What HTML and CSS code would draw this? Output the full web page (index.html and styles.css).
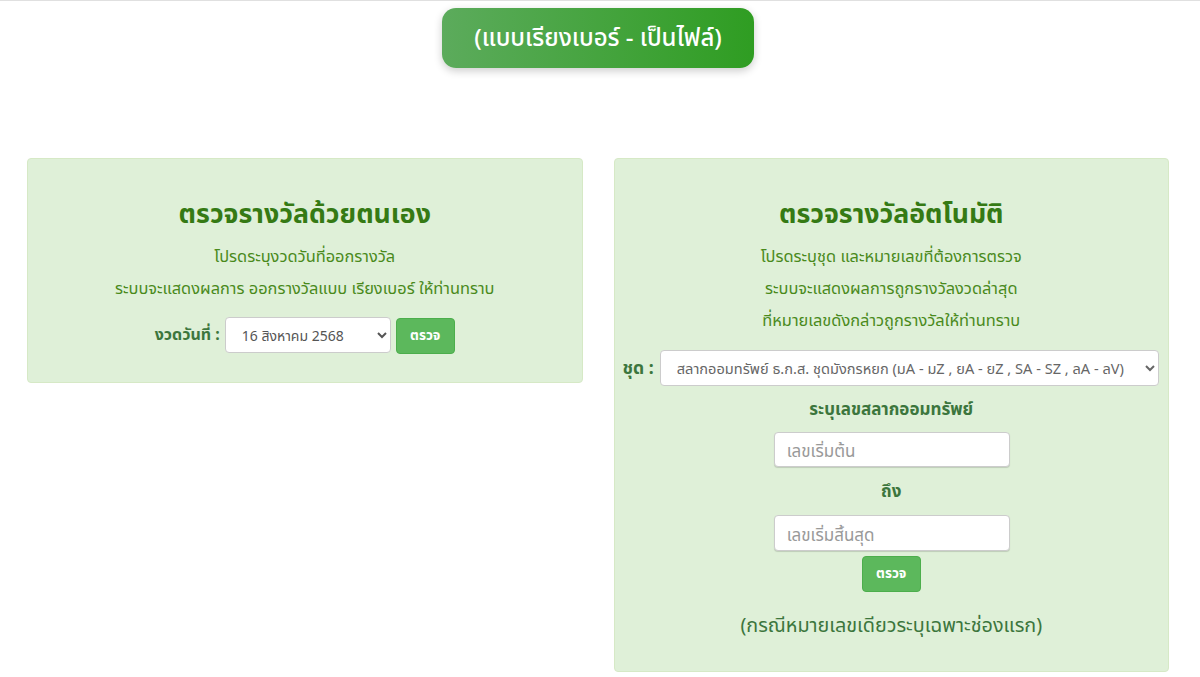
FILE: index.html
```html
<!DOCTYPE html>
<html lang="th">
<head>
    <meta charset="UTF-8">
    <meta name="viewport" content="width=device-width, initial-scale=1.0">
    <title>ตรวจรางวัล</title>
    <link rel="stylesheet" href="styles.css">
</head>
<body>
    <div class="top">
        <a class="file-btn" href="#">(แบบเรียงเบอร์ - เป็นไฟล์)</a>
    </div>

    <div class="panels">
        <div class="panel panel-short">
            <h2>ตรวจรางวัลด้วยตนเอง</h2>
            <p>โปรดระบุงวดวันที่ออกรางวัล</p>
            <p>ระบบจะแสดงผลการ ออกรางวัลแบบ เรียงเบอร์ ให้ท่านทราบ</p>
            <form class="date-row">
                <label for="draw">งวดวันที่ :</label>
                <select id="draw" class="date-select">
                    <option>16 สิงหาคม 2568</option>
                </select>
                <button type="button" class="check">ตรวจ</button>
            </form>
        </div>

        <div class="panel panel-tall">
            <h2>ตรวจรางวัลอัตโนมัติ</h2>
            <p>โปรดระบุชุด และหมายเลขที่ต้องการตรวจ</p>
            <p>ระบบจะแสดงผลการถูกรางวัลงวดล่าสุด</p>
            <p>ที่หมายเลขดังกล่าวถูกรางวัลให้ท่านทราบ</p>
            <form>
                <div class="set-row">
                    <label for="set">ชุด :</label>
                    <select id="set" class="set-select">
                        <option>สลากออมทรัพย์ ธ.ก.ส. ชุดมังกรหยก (มA - มZ , ยA - ยZ , SA - SZ , ลA - ลV)</option>
                    </select>
                </div>
                <div class="range">
                    <div class="range-title">ระบุเลขสลากออมทรัพย์</div>
                    <input type="text" placeholder="เลขเริ่มต้น">
                    <div class="range-to">ถึง</div>
                    <input type="text" class="range-end" placeholder="เลขเริ่มสิ้นสุด">
                    <button type="button" class="check">ตรวจ</button>
                    <div class="note">(กรณีหมายเลขเดียวระบุเฉพาะช่องแรก)</div>
                </div>
            </form>
        </div>
    </div>
</body>
</html>
```

FILE: styles.css
```css
* {
    box-sizing: border-box;
}
body {
    margin: 0;
    background: #fff;
    border-top: 1px solid #e0e0e0;
    font-family: "Noto Sans", "Noto Sans Thai", "Liberation Sans", sans-serif;
    color: #3c763d;
}
.top {
    display: flex;
    justify-content: center;
    padding: 7px 4px 0 0;
}
.file-btn {
    width: 312px;
    height: 60px;
    display: flex;
    align-items: center;
    justify-content: center;
    border-radius: 14px;
    background: linear-gradient(90deg, #5cab5c, #2f9d22);
    box-shadow: 0 3px 8px rgba(0,0,0,0.2);
    color: #fff;
    font-size: 24px;
    font-weight: 500;
    text-decoration: none;
}
.panels {
    display: flex;
    align-items: flex-start;
    gap: 31px;
    padding: 90px 31px 0 27px;
}
.panel {
    flex: 1;
    background: #dff0d8;
    border: 1px solid #d6e9c6;
    border-radius: 4px;
    text-align: center;
    padding-top: 35px;
}
.panel-short {
    height: 225px;
}
.panel-tall {
    height: 514px;
}
h2 {
    margin: 0 0 8px;
    font-size: 26.7px;
    line-height: 38px;
    font-weight: 700;
    color: #357a14;
}
p {
    margin: 0;
    font-size: 16.4px;
    line-height: 32px;
    color: #4a8a1c;
}
.date-row {
    display: flex;
    align-items: center;
    justify-content: center;
    margin-top: 12px;
    gap: 5px;
}
.date-row .check {
    margin-top: 2px;
}
label {
    font-size: 16px;
    font-weight: 700;
}
.date-select {
    width: 166px;
    height: 36px;
    padding: 0 12px;
}
select {
    background: #fff;
    border: 1px solid #ccc;
    border-radius: 4px;
    font-family: inherit;
    font-size: 14px;
    color: #555;
}
.check {
    width: 59px;
    height: 36px;
    background: #5cb85c;
    border: 1px solid #4cae4c;
    border-radius: 4px;
    color: #fff;
    font-family: inherit;
    font-size: 13.5px;
    font-weight: 700;
}
.set-row {
    display: flex;
    align-items: center;
    gap: 6px;
    margin-top: 14px;
    padding: 0 9px 0 8px;
}
.set-row label {
    font-size: 17.6px;
}
.set-select {
    flex: 1;
    min-width: 0;
    height: 36px;
    padding: 0 12px;
    font-size: 14.6px;
    color: #666;
}
.range {
    display: flex;
    flex-direction: column;
    align-items: center;
}
.range-title {
    margin-top: 9px;
    font-size: 17px;
    line-height: 28px;
    font-weight: 700;
}
.range input {
    width: 236px;
    height: 35px;
    margin: 9px 0 0 1px;
    padding: 2px 12px 0;
    border: 1px solid #ccc;
    border-radius: 4px;
    box-shadow: 0 1px 1px rgba(0,0,0,0.15);
    font-family: inherit;
    font-size: 17px;
}
.range input::placeholder {
    color: #999;
}
.range .range-end {
    height: 36px;
}
.range-to {
    margin-top: 9px;
    font-size: 17px;
    line-height: 30px;
    font-weight: 700;
}
.range .check {
    margin-top: 5px;
}
.note {
    margin-top: 17px;
    font-size: 19.8px;
    line-height: 32px;
}
```
